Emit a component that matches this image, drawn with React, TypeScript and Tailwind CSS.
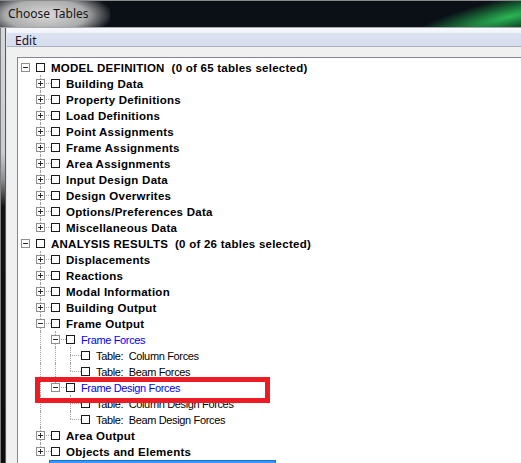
import React from "react";

type TreeNode = {
    label: string;
    kind: "root" | "group" | "sub" | "table";
    open?: boolean;
    selected?: boolean;
    children?: TreeNode[];
};

type FlatRow = {
    node: TreeNode;
    level: number;
    guides: boolean[];
    last: boolean;
};

const collapsed = (label: string): TreeNode => ({ label, kind: "group", children: [] });

const tree: TreeNode[] = [
    {
        label: "MODEL DEFINITION  (0 of 65 tables selected)",
        kind: "root",
        open: true,
        children: [
            collapsed("Building Data"),
            collapsed("Property Definitions"),
            collapsed("Load Definitions"),
            collapsed("Point Assignments"),
            collapsed("Frame Assignments"),
            collapsed("Area Assignments"),
            collapsed("Input Design Data"),
            collapsed("Design Overwrites"),
            collapsed("Options/Preferences Data"),
            collapsed("Miscellaneous Data"),
        ],
    },
    {
        label: "ANALYSIS RESULTS  (0 of 26 tables selected)",
        kind: "root",
        open: true,
        children: [
            collapsed("Displacements"),
            collapsed("Reactions"),
            collapsed("Modal Information"),
            collapsed("Building Output"),
            {
                label: "Frame Output",
                kind: "group",
                open: true,
                children: [
                    {
                        label: "Frame Forces",
                        kind: "sub",
                        open: true,
                        children: [
                            { label: "Table:  Column Forces", kind: "table" },
                            { label: "Table:  Beam Forces", kind: "table" },
                        ],
                    },
                    {
                        label: "Frame Design Forces",
                        kind: "sub",
                        open: true,
                        children: [
                            { label: "Table:  Column Design Forces", kind: "table" },
                            { label: "Table:  Beam Design Forces", kind: "table" },
                        ],
                    },
                ],
            },
            collapsed("Area Output"),
            collapsed("Objects and Elements"),
        ],
    },
    {
        // only the top of this row's highlight is in view
        label: "",
        kind: "root",
        selected: true,
        children: [],
    },
];

const flatten = (nodes: TreeNode[], level: number, guides: boolean[]): FlatRow[] => {
    const rows: FlatRow[] = [];
    nodes.forEach((node, i) => {
        const last = i === nodes.length - 1;
        rows.push({ node, level, guides, last });
        if (node.open && node.children) {
            // no lines at root level
            rows.push(...flatten(node.children, level + 1, [...guides, level > 0 && !last]));
        }
    });
    return rows;
};

const Expander = ({ open }: { open: boolean }) => (
    <div className="absolute left-[3px] top-[4px] flex h-[9px] w-[9px] items-center justify-center border border-[#8f8f8f] bg-white">
        <div className="relative h-[5px] w-[5px]">
            <div className="absolute left-0 top-[2px] h-[1px] w-[5px] bg-[#2a2a2a]" />
            {!open && <div className="absolute left-[2px] top-0 h-[5px] w-[1px] bg-[#2a2a2a]" />}
        </div>
    </div>
);

const TreeRow = ({ row }: { row: FlatRow }) => {
    const { node, level, guides, last } = row;
    const hasExpander = node.kind !== "table";

    const labelClass =
        node.kind === "table"
            ? "text-[11px] tracking-[-0.35px] text-black"
            : node.kind === "sub"
            ? "text-[11px] tracking-[-0.35px] text-[#0000ff]"
            : "text-[11.5px] font-bold tracking-[0.25px] text-black";

    return (
        <div className="flex h-[16px] items-center">
            {guides.map((g, i) => (
                <div key={i} className="relative h-full w-[15px] shrink-0">
                    {g && <div className="absolute left-[7px] top-0 h-full border-l border-dotted border-[#a0a0a0]" />}
                </div>
            ))}
            <div className="relative h-full w-[15px] shrink-0">
                {level > 0 && (
                    <>
                        <div
                            className={`absolute left-[7px] top-0 border-l border-dotted border-[#a0a0a0] ${last ? "h-[8px]" : "h-full"}`}
                        />
                        <div className="absolute left-[7px] top-[8px] w-[11px] border-t border-dotted border-[#a0a0a0]" />
                    </>
                )}
                {hasExpander && <Expander open={!!node.open} />}
            </div>
            <div className="relative ml-[3px] h-[9px] w-[9px] shrink-0 border border-[#1a1a1a] bg-white" />
            {node.selected ? (
                <span className="ml-[4px] mt-[1px] h-[16px] w-[227px] border border-[#1e6fd0] bg-[#3399ff]" />
            ) : (
                <span className={`ml-[4px] mt-[2px] whitespace-pre px-[2px] leading-[15px] ${labelClass}`}>
                    {node.label}
                </span>
            )}
        </div>
    );
};

export default function App() {
    const rows = flatten(tree, 0, []);

    return (
        <div className="relative flex h-[463px] w-[521px] flex-col overflow-hidden bg-[#0b0f16] font-['Liberation_Sans',Arial,sans-serif]">
            {/* title bar */}
            <div className="relative h-[27px] shrink-0 overflow-hidden border-t border-[#8a8a8a] bg-[#0b0f16]">
                <div className="absolute -left-[18px] -top-[10px] h-[48px] w-[128px] bg-[radial-gradient(ellipse_at_center,rgba(226,226,226,0.96)_0%,rgba(198,198,198,0.85)_45%,rgba(11,15,22,0)_74%)]" />
                <div className="absolute -right-[40px] top-[4px] h-[40px] w-[170px] -rotate-[14deg] bg-[radial-gradient(ellipse_at_70%_50%,rgba(46,190,90,0.95)_0%,rgba(30,150,70,0.6)_35%,rgba(11,15,22,0)_68%)]" />
                <span className="relative ml-[8px] block pt-[4px] font-['Noto_Sans',sans-serif] text-[12px] leading-[18px] text-[#141414]">
                    Choose Tables
                </span>
            </div>
            <div className="h-[1px] shrink-0 bg-[#a8a8a8]" />

            <div className="flex flex-1">
                {/* window frame */}
                <div className="flex w-[7px] shrink-0">
                    <div className="w-[1px] bg-[#7c7c7c]" />
                    <div className="w-[4px] bg-[linear-gradient(to_bottom,#d3d7db_0%,#c9cdd1_28%,#8c8f92_34%,#111_40%,#0d0d0d_100%)]" />
                    <div className="w-[1px] bg-[#5c5c5c]" />
                    <div className="w-[1px] bg-[#e4e4e4]" />
                </div>

                <div className="flex flex-1 flex-col bg-[#f0f0f0]">
                    {/* menu bar */}
                    <div className="h-[19px] shrink-0 border-b border-[#aab0bc] bg-[linear-gradient(to_bottom,#f6f8fc_0%,#f1f4fa_25%,#dbe2f1_30%,#d6deef_100%)] pl-[8px]">
                        <span className="font-['Noto_Sans',sans-serif] text-[12px] leading-[18px] text-[#1c0f1c]">Edit</span>
                    </div>

                    {/* tree view */}
                    <div className="ml-[10px] mt-[10px] w-[540px] flex-1 border-l border-t border-[#828790] bg-white pt-[1px]">
                        {rows.map((row, i) => (
                            <TreeRow key={i} row={row} />
                        ))}
                    </div>
                </div>
            </div>

            {/* annotation */}
            <div className="absolute left-[35px] top-[377px] h-[26px] w-[235px] border-[5px] border-[#ed1c24]" />
        </div>
    );
}
